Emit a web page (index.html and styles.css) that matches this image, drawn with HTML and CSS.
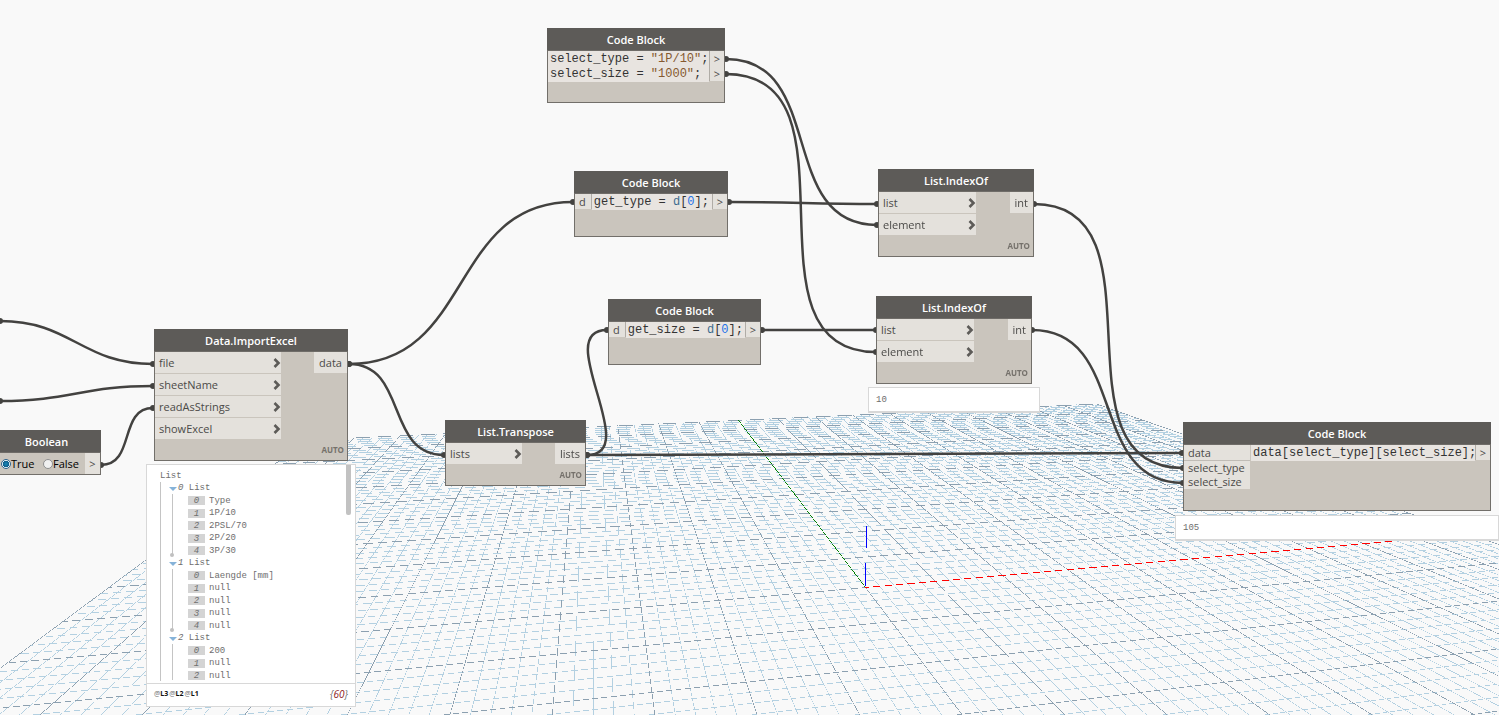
FILE: index.html
```html
<!DOCTYPE html>
<html lang="en">
<head>
    <meta charset="UTF-8">
    <meta name="viewport" content="width=device-width, initial-scale=1.0">
    <title>Graph workspace</title>
    <link rel="stylesheet" href="styles.css">
</head>
<body>
    <main class="workspace">
        <canvas id="grid" class="grid"></canvas>

        <svg class="wires" aria-hidden="true">
            <g id="wires"></g>
        </svg>

        <section class="node code-one">
            <h2>Code Block</h2>
            <div class="code-row">
                <pre class="code">select_type = <span class="str">"1P/10"</span>;
select_size = <span class="str">"1000"</span>;</pre>
                <div class="code-out"><span>&gt;</span><span>&gt;</span></div>
            </div>
        </section>

        <section class="node code-type">
            <h2>Code Block</h2>
            <div class="code-row">
                <div class="code-in"><span>d</span></div>
                <pre class="code">get_type = <span class="ref">d</span>[<span class="num">0</span>];</pre>
                <div class="code-out"><span>&gt;</span></div>
            </div>
        </section>

        <section class="node code-size">
            <h2>Code Block</h2>
            <div class="code-row">
                <div class="code-in"><span>d</span></div>
                <pre class="code">get_size = <span class="ref">d</span>[<span class="num">0</span>];</pre>
                <div class="code-out"><span>&gt;</span></div>
            </div>
        </section>

        <section class="node import">
            <h2>Data.ImportExcel</h2>
            <div class="ports">
                <div class="inputs">
                    <div class="port">file <svg class="chevron" viewBox="0 0 8 10"><path d="M1.5 1 L5.5 5 L1.5 9"/></svg></div>
                    <div class="port">sheetName <svg class="chevron" viewBox="0 0 8 10"><path d="M1.5 1 L5.5 5 L1.5 9"/></svg></div>
                    <div class="port">readAsStrings <svg class="chevron" viewBox="0 0 8 10"><path d="M1.5 1 L5.5 5 L1.5 9"/></svg></div>
                    <div class="port">showExcel <svg class="chevron" viewBox="0 0 8 10"><path d="M1.5 1 L5.5 5 L1.5 9"/></svg></div>
                </div>
                <div class="port">data</div>
            </div>
            <div class="lacing">AUTO</div>
        </section>

        <section class="node boolean">
            <h2>Boolean</h2>
            <div class="bool-row">
                <label><input type="radio" name="bool" checked>True</label>
                <label><input type="radio" name="bool">False</label>
                <span class="bool-out">&gt;</span>
            </div>
        </section>

        <section class="node transpose">
            <h2>List.Transpose</h2>
            <div class="ports">
                <div class="inputs">
                    <div class="port">lists <svg class="chevron" viewBox="0 0 8 10"><path d="M1.5 1 L5.5 5 L1.5 9"/></svg></div>
                </div>
                <div class="port">lists</div>
            </div>
            <div class="lacing">AUTO</div>
        </section>

        <section class="node index-type">
            <h2>List.IndexOf</h2>
            <div class="ports">
                <div class="inputs">
                    <div class="port">list <svg class="chevron" viewBox="0 0 8 10"><path d="M1.5 1 L5.5 5 L1.5 9"/></svg></div>
                    <div class="port">element <svg class="chevron" viewBox="0 0 8 10"><path d="M1.5 1 L5.5 5 L1.5 9"/></svg></div>
                </div>
                <div class="port">int</div>
            </div>
            <div class="lacing">AUTO</div>
        </section>

        <section class="node index-size">
            <h2>List.IndexOf</h2>
            <div class="ports">
                <div class="inputs">
                    <div class="port">list <svg class="chevron" viewBox="0 0 8 10"><path d="M1.5 1 L5.5 5 L1.5 9"/></svg></div>
                    <div class="port">element <svg class="chevron" viewBox="0 0 8 10"><path d="M1.5 1 L5.5 5 L1.5 9"/></svg></div>
                </div>
                <div class="port">int</div>
            </div>
            <div class="lacing">AUTO</div>
        </section>

        <section class="node code-result">
            <h2>Code Block</h2>
            <div class="code-row">
                <div class="code-in"><span>data</span><span>select_type</span><span>select_size</span></div>
                <pre class="code">data[select_type][select_size];</pre>
                <div class="code-out"><span>&gt;</span></div>
            </div>
        </section>

        <div class="preview preview-index">10</div>
        <div class="preview preview-result">105</div>

        <div class="preview preview-list">
            <div class="tree">
                <div class="tree-title">List</div>
                <ul class="tree-root">
                    <li>
                        <div class="branch"><i>0</i> List</div>
                        <ul class="leaves">
                            <li><i>0</i>Type</li>
                            <li><i>1</i>1P/10</li>
                            <li><i>2</i>2PSL/70</li>
                            <li><i>3</i>2P/20</li>
                            <li><i>4</i>3P/30</li>
                        </ul>
                    </li>
                    <li>
                        <div class="branch"><i>1</i> List</div>
                        <ul class="leaves">
                            <li><i>0</i>Laengde [mm]</li>
                            <li><i>1</i>null</li>
                            <li><i>2</i>null</li>
                            <li><i>3</i>null</li>
                            <li><i>4</i>null</li>
                        </ul>
                    </li>
                    <li>
                        <div class="branch"><i>2</i> List</div>
                        <ul class="leaves open">
                            <li><i>0</i>200</li>
                            <li><i>1</i>null</li>
                            <li><i>2</i>null</li>
                        </ul>
                    </li>
                </ul>
                <div class="scroll-thumb"></div>
            </div>
            <div class="tree-footer">
                <div class="levels"><span>@<b>L3</b></span><span>@<b>L2</b></span><span>@<b>L1</b></span></div>
                <em>{<span class="count">60</span>}</em>
            </div>
        </div>
    </main>

    <script src="script.js"></script>
</body>
</html>
```
FILE: styles.css
```css
body {
    margin: 0;
    background-color: #f9f9f9;
    font-family: "Open Sans", "Noto Sans", sans-serif;
    font-size: 11px;
    color: #4b4a48;
}

ul {
    list-style: none;
    margin: 0;
    padding: 0;
}

.workspace {
    position: relative;
    min-height: 100vh;
    overflow: hidden;
}

.grid,
.wires {
    position: absolute;
    top: 0;
    left: 0;
}

.wires {
    width: 100%;
    height: 100%;
}

.wires path {
    fill: none;
    stroke: #434240;
    stroke-width: 2.5;
}

.wires circle {
    fill: #434240;
}

/* nodes */
.node {
    position: absolute;
    box-sizing: border-box;
    border: 1px solid #726f6a;
    background-color: #cac5bd;
}

.node h2 {
    margin: -1px -1px 0;
    height: 23px;
    line-height: 24px;
    border-bottom: 1px solid #6f6c68;
    box-sizing: border-box;
    background-color: #5d5b58;
    color: #fff;
    font-size: 11px;
    font-weight: 600;
    text-align: center;
}

.ports {
    display: flex;
    justify-content: space-between;
    align-items: flex-start;
}

.inputs {
    width: 126px;
}

.port {
    display: flex;
    justify-content: space-between;
    align-items: center;
    box-sizing: border-box;
    height: 22px;
    padding: 0 4px;
    line-height: 22px;
    background-color: #e4e1dc;
    border-bottom: 1px solid #cac5bd;
}

.inputs .port {
    padding-right: 0;
}

.inputs + .port {
    padding: 0 5px;
}

.chevron {
    width: 8px;
    height: 10px;
}

.chevron path {
    fill: none;
    stroke: #5d5b58;
    stroke-width: 2.6;
}

.lacing {
    height: 20px;
    line-height: 20px;
    padding-right: 3px;
    text-align: right;
    font-size: 8px;
    font-weight: 700;
    color: #75716b;
}

.code-row {
    display: flex;
    align-items: flex-start;
}

.code {
    flex: 1;
    min-width: 0;
    margin: 0;
    padding: 1px 0 0 2px;
    background-color: #e8e4e0;
    font: 12px/15px "Liberation Mono", monospace;
    color: #333;
}

.str {
    color: #85592f;
}

.ref {
    color: #3e6c8f;
}

.num {
    color: #1f73e8;
}

.code-in span,
.code-out span {
    display: block;
    height: 15px;
    line-height: 16px;
    padding: 0 4px;
    background-color: #e4e1dc;
}

.code-in span {
    padding: 0 5px 0 4px;
}

.code-in,
.code-out {
    border: 0 solid #b0aca6;
}

.code-in {
    border-right-width: 1px;
}

.code-out {
    border-left-width: 1px;
}

.code-one { left: 547px; top: 28px; width: 178px; height: 75px; }
.code-type { left: 574px; top: 171px; width: 154px; height: 66px; }
.code-size { left: 608px; top: 299px; width: 153px; height: 66px; }
.code-result { left: 1183px; top: 422px; width: 308px; height: 89px; }
.import { left: 154px; top: 329px; width: 194px; }
.transpose { left: 445px; top: 420px; width: 141px; }
.index-type { left: 878px; top: 169px; width: 156px; }
.index-size { left: 876px; top: 296px; width: 156px; }
.boolean { left: -8px; top: 430px; width: 109px; }

.transpose .inputs {
    width: 76px;
}

.index-type .inputs,
.index-size .inputs {
    width: 97px;
}

.code-result .code-in {
    box-sizing: border-box;
    width: 67px;
    border-right-color: #cac5bd;
}

.code-result .code-in span {
    height: 14px;
    line-height: 14px;
}

.code-result .code-in span:first-child {
    height: 15px;
    line-height: 15px;
    border-bottom: 1px solid #c0bcb6;
}

.bool-row {
    display: flex;
    align-items: center;
    padding-left: 8px;
    height: 21px;
    color: #000;
}

.bool-row label {
    display: flex;
    align-items: center;
    width: 42px;
}

.bool-row input {
    appearance: none;
    flex: none;
    width: 10px;
    height: 10px;
    margin: 0;
    border: 1px solid #8e8f8f;
    border-radius: 50%;
    background-color: #f0f0f0;
}

.bool-row input:checked {
    border-color: #2c628b;
    background-image: radial-gradient(circle, #1787b8 0, #0f5f8c 3px, #e8f2f8 3px);
}

.bool-out {
    margin-left: auto;
    width: 15px;
    line-height: 21px;
    text-align: center;
    color: #4b4a48;
    background-color: #e4e1dc;
}

/* value previews */
.preview {
    position: absolute;
    box-sizing: border-box;
    border: 1px solid #d8d8d8;
    background-color: #fff;
    font: 9px/12px "Liberation Mono", monospace;
    color: #6e6e6e;
}

.preview-index,
.preview-result {
    padding: 6px 7px 5px;
    border-bottom-width: 2px;
}

.preview-index {
    left: 868px;
    top: 387px;
    width: 172px;
}

.preview-result {
    left: 1175px;
    top: 515px;
    width: 324px;
}

.preview-list {
    left: 146px;
    top: 464px;
    width: 210px;
}

.tree {
    position: relative;
    height: 213px;
    padding: 5px 0 0 13px;
}

.tree-root {
    height: 199px;
    border-left: 1px solid #c4c4c4;
}

.branch {
    position: relative;
    padding-left: 17px;
    height: 12px;
}

.branch::before {
    content: "";
    position: absolute;
    left: 8px;
    top: 5px;
    border: 4px solid transparent;
    border-top: 4px solid #86b3d9;
    border-bottom: 0;
}

.leaves {
    position: relative;
    margin-left: 11px;
}

.leaves::before {
    content: "";
    position: absolute;
    left: 0;
    top: 0;
    bottom: 2px;
    border-left: 1px solid #c4c4c4;
}

.leaves::after {
    content: "";
    position: absolute;
    left: -2px;
    bottom: 0;
    width: 4px;
    height: 4px;
    border-radius: 50%;
    background-color: #c0c0c0;
}

.leaves.open::after {
    display: none;
}

.leaves li {
    display: flex;
    align-items: center;
    gap: 4px;
    height: 12px;
    padding-left: 16px;
}

.leaves li:nth-child(odd) {
    height: 13px;
}

.leaves i {
    width: 17px;
    height: 9px;
    line-height: 10px;
    text-align: center;
    background-color: #d4d4d4;
}

.scroll-thumb {
    position: absolute;
    right: 4px;
    top: 0;
    width: 5px;
    height: 50px;
    border-radius: 0 0 2px 2px;
    background-color: #c2c2c2;
}

.tree-footer {
    display: flex;
    justify-content: space-between;
    align-items: center;
    height: 20px;
    padding: 0 7px 2px;
    border-top: 1px solid #d8d8d8;
    font-family: "Open Sans", sans-serif;
}

.levels {
    display: flex;
    gap: 1px;
    font-size: 7px;
}

.levels b {
    color: #111;
}

.tree-footer em {
    font-size: 10px;
}

.count {
    color: #8b1a1a;
}
```
FILE: script.js
```js
const workspace = document.querySelector('.workspace');
const canvas = document.getElementById('grid');
const ctx = canvas.getContext('2d');

// camera: both vanishing points lie on the horizon
const horizon = 228;
const origin = { x: 865.5, y: 587.5 };
const vanishX = 4955;
const vanishY = 592.5;
const depthX = 0.003469;
const depthY = 0.01738;
const size = 50;

function project(x, y) {
    const w = 1 + depthX * x + depthY * y;
    return {
        x: (vanishX * depthX * x + vanishY * depthY * y + origin.x) / w,
        y: (horizon * (w - 1) + origin.y) / w
    };
}

// thin line without smoothing, pixels missed by the stroke stay empty
function thinLine(a, b, color) {
    const thickness = 0.63;
    ctx.fillStyle = color;
    const steep = Math.abs(b.y - a.y) > Math.abs(b.x - a.x);
    const p = steep ? { u: a.y, v: a.x } : { u: a.x, v: a.y };
    const q = steep ? { u: b.y, v: b.x } : { u: b.x, v: b.y };
    const slope = (q.v - p.v) / (q.u - p.u);
    const half = thickness / 2 * Math.sqrt(1 + slope * slope);
    const limit = steep ? canvas.height : canvas.width;
    const from = Math.max(0, Math.floor(Math.min(p.u, q.u)));
    const to = Math.min(limit, Math.floor(Math.max(p.u, q.u)));
    for (let u = from; u < to; u++) {
        const v = p.v + (u + 0.5 - p.u) * slope;
        const cell = Math.floor(v);
        if (Math.abs(v - cell - 0.5) <= half) {
            steep ? ctx.fillRect(cell, u, 1, 1) : ctx.fillRect(u, cell, 1, 1);
        }
    }
}

// lines that pass behind the camera are cut just in front of it
function cut(fixed, depthFixed, depthFree) {
    return Math.max(-size, (0.1 - 1 - depthFixed * fixed) / depthFree);
}

function drawGrid() {
    canvas.width = workspace.clientWidth;
    canvas.height = workspace.clientHeight;

    for (const major of [false, true]) {
        const color = major ? '#8ca0b0' : '#b3d0e1';
        for (let i = -size; i <= size; i++) {
            if ((i % 5 === 0) !== major) continue;
            thinLine(project(i, cut(i, depthX, depthY)), project(i, size), color);
            thinLine(project(cut(i, depthY, depthX), i), project(size, i), color);
        }
    }

    thinLine(project(0, 0), project(size, 0), '#ff0000');
    thinLine(project(0, 0), project(0, size), '#008000');
    ctx.fillStyle = '#0000ff';
    ctx.fillRect(866, 526, 1, 22);
    ctx.fillRect(865, 563, 1, 23);
}

// start x, start y, end x, end y
const wires = [
    [726, 59, 877, 225],
    [726, 74, 876, 352],
    [729, 202, 877, 204],
    [762, 330, 876, 330],
    [349, 364, 573, 202],
    [349, 364, 444, 455],
    [587, 455, 607, 330],
    [587, 455, 1182, 453],
    [1034, 204, 1183, 468],
    [1032, 330, 1183, 483],
    [0, 321, 153, 364],
    [0, 401, 153, 386],
    [101, 465, 153, 408]
];

function drawWires() {
    let markup = '';
    for (const [x1, y1, x2, y2] of wires) {
        const offset = 0.45 * Math.hypot(x2 - x1, y2 - y1);
        markup += `<path d="M${x1} ${y1} C${x1 + offset} ${y1} ${x2 - offset} ${y2} ${x2} ${y2}"/>`;
        markup += `<circle cx="${x1}" cy="${y1}" r="3"/><circle cx="${x2}" cy="${y2}" r="3"/>`;
    }
    document.getElementById('wires').innerHTML = markup;
}

drawGrid();
drawWires();
window.addEventListener('resize', drawGrid);
```
